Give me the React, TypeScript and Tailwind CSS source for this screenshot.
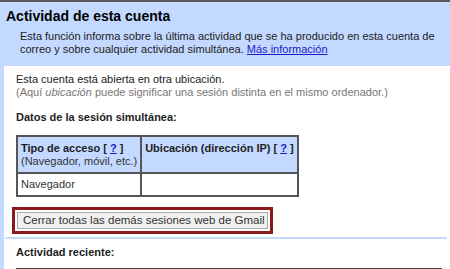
import React from "react";

export default function App() {
  return (
    <div
      className="w-[450px] h-[269px] overflow-hidden bg-[#c3d9ff] border-t-2 border-[#5a5a5a] text-black"
      style={{ fontFamily: '"Liberation Sans", Arial, sans-serif' }}
    >
      <div className="pl-[6px] pt-[6px] text-[14px] font-bold leading-[17px]">
        Actividad de esta cuenta
      </div>
      <div className="pl-[20px] pr-[10px] pt-[5px] text-[11px] leading-[13px] text-[#222]">
        <div>Esta función informa sobre la última actividad que se ha producido en esta cuenta de</div>
        <div>
          correo y sobre cualquier actividad simultánea.{" "}
          <a className="inline-block text-[#1a1acc] underline">Más información</a>
        </div>
      </div>
      <div className="mt-[10px] ml-[4px] bg-white h-[300px] pt-[7px] pl-[12px] text-[11px] leading-[13px]">
        <div className="text-[#222]">Esta cuenta está abierta en otra ubicación.</div>
        <div className="text-[#777]">
          (Aquí <i>ubicación</i> puede significar una sesión distinta en el mismo ordenador.)
        </div>
        <div className="mt-[12px] font-bold text-[#222]">Datos de la sesión simultánea:</div>
        <table className="mt-[11px] border-2 border-[#555] border-collapse w-[281px]">
          <tbody>
            <tr className="bg-[#c3d9ff] align-top">
              <td className="border-2 border-[#555] px-[3px] pt-[5px] w-[124px] h-[37px] whitespace-nowrap">
                <div className="font-bold text-[#222]">
                  Tipo de acceso [ <span className="text-[#1a1acc] underline">?</span> ]
                </div>
                <div className="text-[#333]">(Navegador, móvil, etc.)</div>
              </td>
              <td className="border-2 border-[#555] px-[3px] pt-[5px] whitespace-nowrap">
                <span className="font-bold text-[#222]">
                  Ubicación (dirección IP) [ <span className="text-[#1a1acc] underline">?</span> ]
                </span>
              </td>
            </tr>
            <tr>
              <td className="border-2 border-[#555] px-[3px] h-[23px] text-[#333]">Navegador</td>
              <td className="border-2 border-[#555]"></td>
            </tr>
          </tbody>
        </table>
        <div className="mt-[10px] -ml-[4px] w-[261px] border-[3px] border-[#8a1a1a] p-[2px]">
          <div className="border border-[#aaa] bg-[#f0f0f0] px-[5px] h-[17px] flex items-center text-[11.5px] text-[#333] whitespace-nowrap">
            Cerrar todas las demás sesiones web de Gmail
          </div>
        </div>
        <div className="mt-[3px] -ml-[11px] mr-[3px] h-[2px] bg-[#c3d9ff]"></div>
        <div className="mt-[7px] font-bold text-[#222]">Actividad reciente:</div>
        <div className="mt-[9px] mr-[8px] h-[2px] bg-[#444]"></div>
      </div>
    </div>
  );
}
